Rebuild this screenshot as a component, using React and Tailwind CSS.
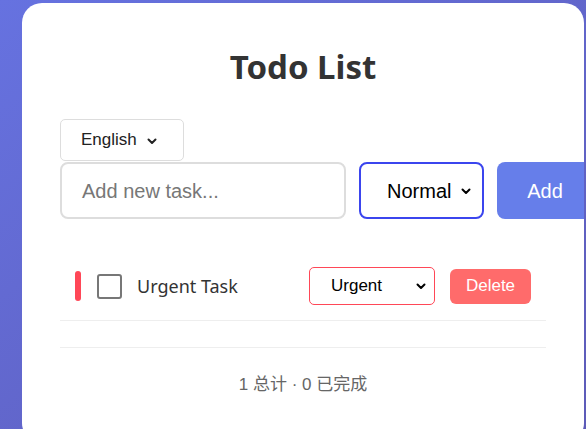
import React, { useState } from "react";

const Chevron = ({ className = "" }) => (
  <svg viewBox="0 0 12 12" className={className} fill="none" stroke="currentColor" strokeWidth="2" strokeLinecap="round" strokeLinejoin="round">
    <path d="M2.5 4.5L6 8l3.5-3.5" />
  </svg>
);

export default function App() {
  const [todos] = useState([{ id: 1, text: "Urgent Task", priority: "Urgent", done: false }]);
  const completed = todos.filter((t) => t.done).length;

  return (
    <div className="w-[586px] h-[429px] overflow-hidden bg-gradient-to-br from-[#6672e0] to-[#5d5bb8] pt-[3px] pl-[22px]">
      <div className="w-[562px] h-[440px] bg-white rounded-[20px] overflow-hidden pt-[44px] px-[38px]">
        <h1 className="text-center text-[33px] leading-[40px] font-bold text-[#333] font-['Noto_Sans',sans-serif]">
          Todo List
        </h1>

        <div className="mt-[32px] w-[124px] h-[42px] border border-[#ddd] rounded-[5px] flex items-center pl-[20px] gap-[9px] text-[#222] font-['Liberation_Sans',sans-serif] text-[17px]">
          <span>English</span>
          <Chevron className="w-[12px] h-[12px] mt-[1px]" />
        </div>

        <div className="mt-px flex gap-[13px] font-['Liberation_Sans',sans-serif] text-[20px]">
          <div className="w-[286px] h-[57px] shrink-0 border-2 border-[#ddd] rounded-[8px] flex items-center pl-[20px] text-[#777]">
            Add new task...
          </div>
          <div className="w-[125px] h-[57px] shrink-0 border-2 border-[#3b45ee] rounded-[8px] flex items-center pl-[26px] pr-[10px] justify-between text-black">
            <span>Normal</span>
            <Chevron className="w-[12px] h-[12px]" />
          </div>
          <div className="w-[96px] h-[57px] shrink-0 bg-[#667eea] rounded-[8px] flex items-center justify-center text-white">
            Add
          </div>
        </div>

        <ul className="mt-[33px]">
          {todos.map((t) => (
            <li key={t.id} className="flex items-center py-[15px] pl-[15px] pr-[15px] border-b border-[#eee]">
              <div className="w-[6px] h-[30px] rounded-full bg-[#ff4757]" />
              <div className="ml-[16px] w-[25px] h-[25px] border-2 border-[#777] rounded-[3px]" />
              <span className="ml-[15px] flex-1 text-[18px] text-[#333] font-['Noto_Sans',sans-serif]">{t.text}</span>
              <div className="w-[126px] h-[38px] border border-[#ff4757] rounded-[5px] flex items-center justify-between pl-[21px] pr-[7px] text-[17px] text-black font-['Liberation_Sans',sans-serif]">
                <span>{t.priority}</span>
                <Chevron className="w-[12px] h-[12px]" />
              </div>
              <div className="ml-[15px] w-[81px] h-[35px] bg-[#ff6b6b] rounded-[6px] flex items-center justify-center text-white text-[17px] font-['Liberation_Sans',sans-serif]">
                Delete
              </div>
            </li>
          ))}
        </ul>

        <div className="mt-[26px] border-t border-[#eee] pt-[27px] text-center text-[17px] leading-[20px] text-[#666] font-['Liberation_Sans','Noto_Sans_CJK_SC',sans-serif]">
          {todos.length} 总计 · {completed} 已完成
        </div>
      </div>
    </div>
  );
}
